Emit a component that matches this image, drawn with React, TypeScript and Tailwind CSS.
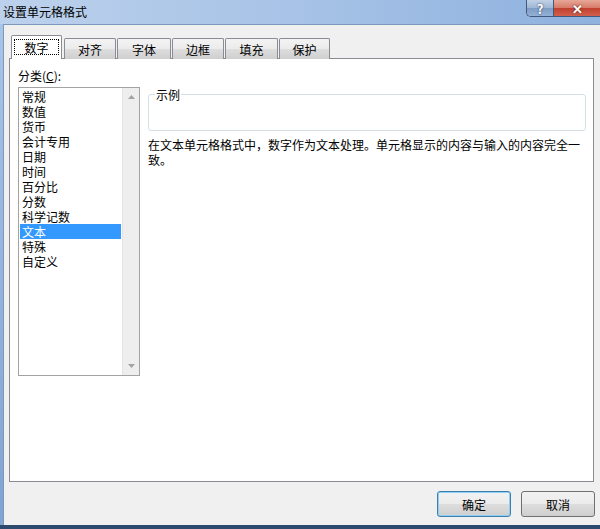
import React from 'react'

const categories = [
  '常规',
  '数值',
  '货币',
  '会计专用',
  '日期',
  '时间',
  '百分比',
  '分数',
  '科学记数',
  '文本',
  '特殊',
  '自定义',
]

const tabs = [
  { label: '数字', w: 'w-[51px]' },
  { label: '对齐', w: 'w-[52px]' },
  { label: '字体', w: 'w-[54px]' },
  { label: '边框', w: 'w-[52px]' },
  { label: '填充', w: 'w-[53px]' },
  { label: '保护', w: 'w-[51px]' },
]

const btnBase =
  'h-[26px] w-[74px] rounded-[3px] border text-[12px] leading-[15px] text-black flex items-center justify-center bg-[linear-gradient(to_bottom,#f2f2f2_0%,#ebebeb_50%,#dddddd_51%,#cfcfcf_100%)]'

export default function App() {
  const selected = '文本'

  return (
    <div className="w-[600px] h-[529px] flex flex-col overflow-hidden bg-[linear-gradient(to_bottom,#a9c6ea,#7fa3d2)] font-['Noto_Sans_CJK_SC','Microsoft_YaHei',sans-serif] text-black">
      {/* title bar */}
      <div className="h-[24px] shrink-0 flex items-start justify-between bg-[linear-gradient(to_right,#bcd1ec,#a9c4e7_45%,#8eb1de)]">
        <span className="pl-[3px] pt-[4px] text-[12px] leading-[15px]">设置单元格格式</span>
        <div className="flex h-[17px] border-b border-l border-[#41597c] rounded-bl-[5px] overflow-hidden">
          <div className="w-[27px] flex items-center justify-center border-r border-[#41597c] bg-[linear-gradient(to_bottom,#c1d1e6,#9fb6d4_50%,#7f9cc3_51%,#93b0d6)] text-white text-[13px] font-bold leading-none [text-shadow:0_0_2px_#1d2c44]">
            ?
          </div>
          <div className="w-[46px] flex items-center justify-center bg-[linear-gradient(to_bottom,#e8a797,#d77a68_50%,#c0402e_51%,#d2604c)] text-white text-[13px] font-bold leading-none [text-shadow:0_0_2px_#4a1008]">
            ✕
          </div>
        </div>
      </div>

      {/* dialog body */}
      <div className="flex-1 ml-[3px] flex flex-col bg-[#f0f0f0] border-l border-t border-[#7d98bb] pt-[10px] pl-[5px] pr-[6px]">
        {/* tabs */}
        <div className="flex items-end h-[24px] -mb-px relative z-10 pl-[2px]">
          {tabs.map((t, i) =>
            i === 0 ? (
              <div
                key={t.label}
                className={`${t.w} h-[24px] mr-[2px] bg-white border border-b-0 border-[#898c95] rounded-t-[2px] pt-[3px] px-[2px]`}
              >
                <div className="h-[16px] border border-dotted border-black flex items-center justify-center text-[12px] leading-[15px]">
                  {t.label}
                </div>
              </div>
            ) : (
              <div
                key={t.label}
                className={`${t.w} h-[21px] mr-[1px] border border-b-0 border-[#898c95] rounded-t-[2px] flex items-center justify-center text-[12px] leading-[15px] bg-[linear-gradient(to_bottom,#f3f3f3_0%,#ebebeb_50%,#dddddd_51%,#cfcfcf_100%)]`}
              >
                {t.label}
              </div>
            ),
          )}
        </div>

        {/* tab panel */}
        <div className="w-[585px] h-[424px] bg-white border border-[#898c95] flex items-start pt-[9px] pl-[8px]">
          <div className="flex flex-col w-[122px]">
            <span className="text-[12px] leading-[15px]">
              分类(<span className="underline">C</span>):
            </span>
            <div className="mt-[4px] h-[289px] border border-[#a3a3a3] flex">
              <div className="flex-1 p-px">
                {categories.map(c => (
                  <div
                    key={c}
                    className={`h-[15px] pl-[2px] text-[12px] leading-[15px] ${
                      c === selected ? 'bg-[#3399ff] text-white' : ''
                    }`}
                  >
                    {c}
                  </div>
                ))}
              </div>
              <div className="w-[17px] bg-[#eeeeee] border-l border-[#e3e3e3] flex flex-col items-center justify-between py-[7px]">
                <svg width="7" height="4" viewBox="0 0 7 4">
                  <path d="M0 4 L3.5 0 L7 4 Z" fill="#a3a3a3" />
                </svg>
                <svg width="7" height="4" viewBox="0 0 7 4">
                  <path d="M0 0 L7 0 L3.5 4 Z" fill="#a3a3a3" />
                </svg>
              </div>
            </div>
          </div>

          <div className="ml-[8px] w-[438px] pt-[26px]">
            <div className="relative h-[37px] border border-[#d5dfe5] rounded-[3px]">
              <span className="absolute -top-[8px] left-[6px] px-px bg-white text-[12px] leading-[15px]">
                示例
              </span>
            </div>
            <p className="mt-[6px] text-[12px] leading-[15px]">
              在文本单元格格式中，数字作为文本处理。单元格显示的内容与输入的内容完全一致。
            </p>
          </div>
        </div>

        {/* buttons */}
        <div className="mt-[9px] flex justify-end gap-[10px] -mr-px">
          <button
            type="button"
            className={`${btnBase} border-[#3c7fb1] shadow-[inset_0_0_0_1px_#8fd0f2]`}
          >
            确定
          </button>
          <button type="button" className={`${btnBase} border-[#707070]`}>
            取消
          </button>
        </div>
      </div>

      <div className="h-[4px] shrink-0 bg-[#2c4a6e]" />
    </div>
  )
}
